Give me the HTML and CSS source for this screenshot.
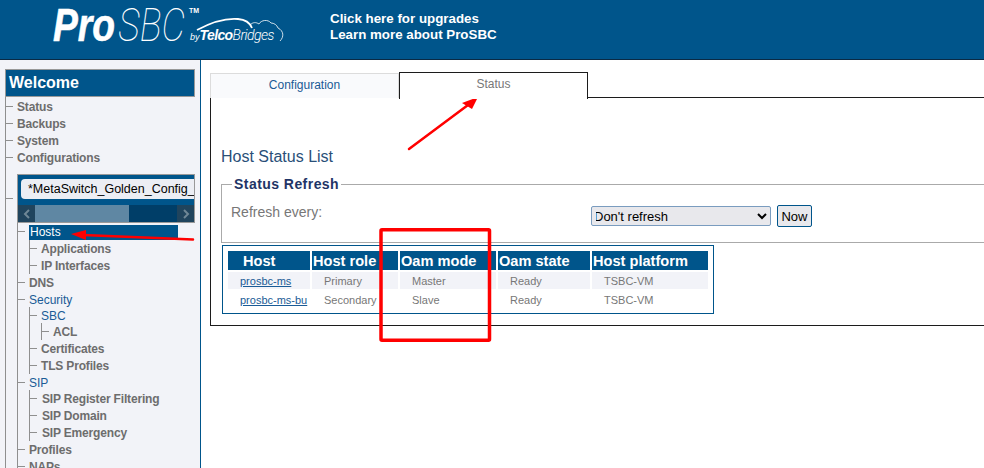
FILE: index.html
```html
<!DOCTYPE html>
<html lang="en">
<head>
<meta charset="utf-8">
<title>ProSBC</title>
<link rel="stylesheet" href="styles.css">
</head>
<body>
<header class="topbar">
  <div class="logo">
    <div class="logo-main"><span class="logo-pro">Pro</span><span class="logo-sbc">SBC</span></div>
    <span class="logo-tm">TM</span>
    <div class="logo-by"><span class="by">by</span><span class="telco">Telco</span><span class="bridges">Bridges</span></div>
    <svg class="logo-swoosh" width="100" height="30" viewBox="0 0 100 30" fill="none" stroke="#fff">
      <path d="M7 16C20 9 36 4 48 5 55 5.500 60 9 62 14" stroke-width="1.800"/>
      <path d="M60 11C63 8 66 8 69 10 71 6 78 5 81 9 84 9 87 11 88 14M88 14C94 17 94 23 90 27" stroke-width=".8"/>
    </svg>
  </div>
  <div class="promo">
    <div>Click here for upgrades</div>
    <div>Learn more about ProSBC</div>
  </div>
</header>
<div class="layout">
  <aside class="sidebar">
    <h2 class="welcome">Welcome</h2>
    <ul class="tree root">
      <li class="node">Status</li>
      <li class="node">Backups</li>
      <li class="node">System</li>
      <li class="node">Configurations</li>
      <li class="node node-box">
        <div class="config-box">
          <div class="config-pill">*MetaSwitch_Golden_Config_</div>
          <div class="scrollbar">
            <span class="scroll-btn"><svg width="8" height="12" viewBox="0 0 8 12" fill="none" stroke="#6f8796" stroke-width="2"><path d="M6 2 2 6l4 4"/></svg></span>
            <span class="scroll-thumb"></span>
            <span class="scroll-btn scroll-end"><svg width="8" height="12" viewBox="0 0 8 12" fill="none" stroke="#6f8796" stroke-width="2"><path d="M2 2l4 4-4 4"/></svg></span>
          </div>
        </div>
      </li>
      <li>
        <ul class="tree sub">
          <li class="node node-sel"><span class="sel">Hosts</span></li>
          <li>
            <ul class="tree sub">
              <li class="node">Applications</li>
              <li class="node">IP Interfaces</li>
            </ul>
          </li>
          <li class="node">DNS</li>
          <li class="node link">Security</li>
          <li>
            <ul class="tree sub tight">
              <li class="node link">SBC</li>
              <li>
                <ul class="tree sub tight">
                  <li class="node">ACL</li>
                </ul>
              </li>
              <li class="node">Certificates</li>
              <li class="node">TLS Profiles</li>
            </ul>
          </li>
          <li class="node link">SIP</li>
          <li>
            <ul class="tree sub tight wide">
              <li class="node">SIP Register Filtering</li>
              <li class="node">SIP Domain</li>
              <li class="node">SIP Emergency</li>
            </ul>
          </li>
          <li class="node">Profiles</li>
          <li class="node">NAPs</li>
        </ul>
      </li>
    </ul>
  </aside>
  <main class="content">
    <div class="tabs">
      <div class="tab">Configuration</div>
      <div class="tab tab-active">Status</div>
    </div>
    <section class="panel">
      <h1 class="title">Host Status List</h1>
      <fieldset class="refresh">
        <legend class="refresh-legend">Status Refresh</legend>
        <div class="refresh-row">
          <span class="refresh-label">Refresh every:</span>
          <select class="refresh-select"><option>Don't refresh</option></select>
          <button class="refresh-now" type="button">Now</button>
        </div>
      </fieldset>
      <table class="hosts">
        <colgroup>
          <col class="c1"><col class="c2"><col class="c3"><col class="c4"><col class="c5">
        </colgroup>
        <thead>
          <tr><th class="th-host">Host</th><th>Host role</th><th>Oam mode</th><th>Oam state</th><th>Host platform</th></tr>
        </thead>
        <tbody>
          <tr class="odd"><td><a href="#">prosbc-ms</a></td><td>Primary</td><td>Master</td><td>Ready</td><td>TSBC-VM</td></tr>
          <tr><td><a href="#">prosbc-ms-bu</a></td><td>Secondary</td><td>Slave</td><td>Ready</td><td>TSBC-VM</td></tr>
        </tbody>
      </table>
    </section>
  </main>
</div>
<svg class="marks" width="984" height="468" viewBox="0 0 984 468" fill="none">
  <rect x="381" y="229.700" width="108.500" height="110.500" stroke="#f00" stroke-width="3.500" rx="1"/>
  <path d="M409 149 468 105" stroke="#f00" stroke-width="2.500" stroke-linecap="round"/>
  <path d="M478 97 462 103 472 109Z" fill="#f00"/>
  <path d="M193 239.500 83 235" stroke="#f00" stroke-width="2.500" stroke-linecap="round"/>
  <path d="M71 234 86 230 86 240Z" fill="#f00"/>
</svg>
</body>
</html>
```
FILE: styles.css
```css
* { box-sizing: border-box; }
html, body { margin: 0; padding: 0; }
body {
  width: 984px;
  height: 468px;
  overflow: hidden;
  position: relative;
  font-family: "Liberation Sans", Arial, sans-serif;
  background: #fff;
}
.topbar {
  height: 60px;
  background: #00558b;
  border-bottom: 1px solid #0a2a44;
  display: flex;
  color: #fff;
}
.logo {
  position: relative;
  width: 277px;
  margin-left: 53px;
  flex: none;
}
.logo-main {
  position: absolute;
  left: 0;
  top: 3px;
  font-size: 46px;
  line-height: 44px;
  font-style: italic;
  white-space: nowrap;
  transform: scaleX(.81);
  transform-origin: left top;
}
.logo-pro { font-weight: 700; -webkit-text-stroke: .6px #fff; }
.logo-sbc { font-family: Roboto, sans-serif; font-weight: 100; margin-left: 4px; }
.logo-tm {
  position: absolute;
  left: 136px;
  top: 7px;
  font-size: 7px;
  line-height: 7px;
  font-weight: 700;
}
.logo-by {
  position: absolute;
  left: 137px;
  top: 27px;
  font-size: 14px;
  line-height: 16px;
  font-style: italic;
  white-space: nowrap;
}
.by { font-size: 9px; }
.telco { font-weight: 700; letter-spacing: -.6px; }
.bridges { font-family: Roboto, sans-serif; font-weight: 300; letter-spacing: -.5px; }
.logo-swoosh {
  position: absolute;
  left: 137px;
  top: 14px;
}
.promo {
  padding-top: 11px;
  font-size: 13.33px;
  line-height: 16px;
  font-weight: 700;
  white-space: nowrap;
}
.layout {
  display: flex;
  height: 408px;
}
.sidebar {
  width: 201px;
  flex: none;
  background: #f2f3f8;
  border-right: 1px solid #00558b;
  padding: 9px 0 0 5px;
  overflow: hidden;
}
.welcome {
  margin: 0;
  width: 190px;
  height: 28px;
  background: #00558b;
  border: 1px solid #999;
  color: #fff;
  font-size: 16px;
  line-height: 25px;
  font-weight: 700;
  padding-left: 3px;
}
.tree {
  list-style: none;
  margin: 0;
  padding: 0;
  border-left: 1px solid #8f8f8f;
  font-size: 12px;
  letter-spacing: -.17px;
  font-weight: 700;
  color: #6d6d6d;
}
.root { padding-top: 1px; }
.sub { margin-left: 11px; }
.tight { margin-top: -1px; }
.wide > .node::before { margin-right: 5px; }
.node {
  display: flex;
  align-items: center;
  height: 17px;
  white-space: nowrap;
}
.node::before {
  content: "";
  flex: none;
  width: 7px;
  height: 1px;
  background: #8f8f8f;
  margin-right: 4px;
}
.link { color: #1a5b96; font-weight: 400; letter-spacing: 0; }
.node-box {
  height: 49px;
  margin-top: 8px;
}
.sel {
  width: 149px;
  height: 15px;
  margin-top: 2px;
  padding-left: 1px;
  background: #00558b;
  color: #fff;
  font-weight: 400;
  letter-spacing: 0;
  line-height: 15px;
}
.config-box {
  width: 178px;
  height: 49px;
  border: 1px solid #999;
  background: #00558b;
  overflow: hidden;
  display: flex;
  flex-direction: column;
}
.config-pill {
  margin: 4px 0 0 3px;
  width: 180px;
  height: 20px;
  flex: none;
  background: #eceef4;
  border-radius: 4px 0 0 4px;
  color: #000;
  font-size: 12.5px;
  font-weight: 400;
  letter-spacing: 0;
  line-height: 20px;
  padding-left: 7px;
  white-space: nowrap;
  overflow: hidden;
}
.scrollbar {
  margin-top: 6px;
  height: 17px;
  display: flex;
  background: #003e68;
}
.scroll-btn {
  width: 17px;
  flex: none;
  background: #20445d;
  display: flex;
  align-items: center;
  justify-content: center;
}
.scroll-end { margin-left: auto; }
.scroll-thumb { width: 94px; background: #5f87a3; }
.content {
  flex: 1;
  padding: 12px 0 0 9px;
  min-width: 0;
}
.tabs {
  display: flex;
  align-items: flex-end;
  height: 26px;
  position: relative;
  z-index: 1;
}
.tab {
  width: 189px;
  height: 25px;
  border: 1px solid #dcdcdc;
  border-bottom: 0;
  background: #f9fafc;
  text-align: center;
  font-size: 12px;
  line-height: 22px;
  color: #1a5b96;
}
.tab-active {
  height: 27px;
  margin-bottom: -1px;
  border: 1px solid #1c1c1c;
  border-bottom: 0;
  background: #fff;
  color: #777;
}
.panel {
  width: 1000px;
  height: 229px;
  border: 1px solid #1c1c1c;
  padding: 0 0 0 10px;
  margin-top: -1px;
}
.title {
  margin: 0;
  padding-top: 50px;
  font-size: 16px;
  line-height: 18px;
  font-weight: 400;
  color: #2a4f78;
}
.refresh {
  margin: 10px 0 0 0;
  padding: 0 0 0 9px;
  width: 900px;
  height: 67px;
  border: 1px solid #aaa;
}
.refresh-legend {
  margin-left: 1px;
  padding: 0 2px;
  font-size: 14px;
  line-height: 16px;
  font-weight: 700;
  color: #1f3566;
  letter-spacing: .45px;
}
.refresh-row {
  display: flex;
  align-items: center;
  height: 22px;
  margin-top: 13px;
}
.refresh-label {
  width: 360px;
  font-size: 14px;
  color: #777;
  flex: none;
  margin-top: -8px;
}
.refresh-select {
  width: 180px;
  height: 20px;
  font-family: "Liberation Sans", Arial, sans-serif;
  font-size: 13px;
  background-color: #e8e8ec;
  border: 1px solid #7a9cbf;
  border-radius: 2px;
  color: #000;
  padding: 0;
  text-indent: -2px;
}
.refresh-now {
  width: 35px;
  height: 22px;
  margin-left: 6px;
  padding: 0;
  font-family: "Liberation Sans", Arial, sans-serif;
  font-size: 13px;
  background: #e8e8ec;
  border: 1px solid #00558b;
  border-radius: 2px;
  color: #000;
}
.hosts {
  margin: 2px 0 0 1px;
  width: 492px;
  table-layout: fixed;
  border: 1px solid #00558b;
  border-collapse: separate;
  border-spacing: 2px;
  padding: 3px;
}
.c1 { width: 82px; }
.c2 { width: 86px; }
.c3 { width: 96px; }
.c4 { width: 92px; }
.c5 { width: 116px; }
.hosts th {
  height: 19px;
  padding: 0 0 0 1px;
  background: #00558b;
  color: #fff;
  font-size: 14.6px;
  font-weight: 700;
  text-align: left;
  white-space: nowrap;
  overflow: hidden;
}
.hosts th.th-host { padding-left: 15px; }
.hosts td {
  height: 17px;
  padding: 0 0 0 12px;
  font-size: 11px;
  color: #777;
  white-space: nowrap;
}
.hosts .odd td { background: #f2f3f8; }
.hosts a { color: #1a5b96; }
.marks {
  position: absolute;
  left: 0;
  top: 0;
  pointer-events: none;
}
```
